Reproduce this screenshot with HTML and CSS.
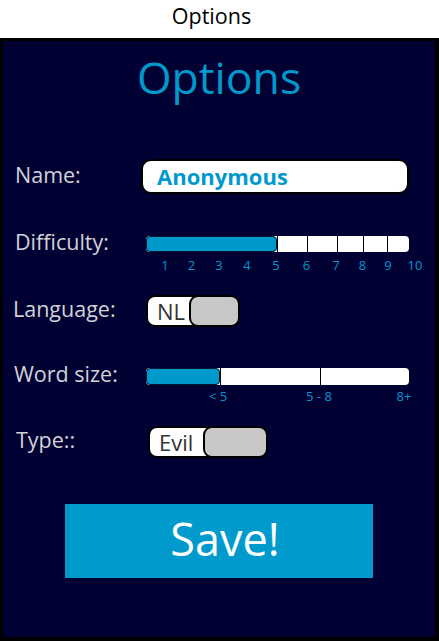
FILE: index.html
```html
<!DOCTYPE html>
<html lang="en">
<head>
<meta charset="utf-8">
<title>Options</title>
<link rel="stylesheet" href="styles.css">
</head>
<body>
<header class="topbar">Options</header>
<main class="panel">
  <h1 class="title">Options</h1>

  <div class="row row-name">
    <span class="lbl">Name:</span>
    <div class="input">Anonymous</div>
  </div>

  <div class="row row-bar row-diff">
    <span class="lbl lbl-bar">Difficulty:</span>
    <div class="ctrl">
      <div class="bar bar-diff">
        <span class="fill"></span>
        <span class="seg s1"></span>
        <span class="seg s2"></span>
        <span class="seg s3"></span>
        <span class="seg s4"></span>
        <span class="seg s5"></span>
      </div>
      <div class="ticks ticks-diff">
        <span>1</span><span>2</span><span>3</span><span>4</span><span>5</span>
        <span>6</span><span>7</span><span>8</span><span>9</span><span>10</span>
      </div>
    </div>
  </div>

  <div class="row row-lang">
    <span class="lbl lbl-lang">Language:</span>
    <div class="toggle toggle-lang">
      <span class="toggle-text">NL</span>
      <span class="knob"></span>
    </div>
  </div>

  <div class="row row-bar row-word">
    <span class="lbl lbl-bar lbl-word">Word size:</span>
    <div class="ctrl">
      <div class="bar bar-word">
        <span class="fill"></span>
        <span class="seg w1"></span>
        <span class="seg w2"></span>
      </div>
      <div class="ticks ticks-word">
        <span>&lt; 5</span><span>5 - 8</span><span>8+</span>
      </div>
    </div>
  </div>

  <div class="row row-type">
    <span class="lbl lbl-type">Type::</span>
    <div class="toggle toggle-type">
      <span class="toggle-text">Evil</span>
      <span class="knob"></span>
    </div>
  </div>

  <div class="save-wrap">
    <button class="save" type="button">Save!</button>
  </div>
</main>
</body>
</html>
```

FILE: styles.css
```css
* { box-sizing: border-box; }

html, body {
  margin: 0;
  padding: 0;
  background: #ffffff;
  font-family: "Open Sans", "Noto Sans", "Liberation Sans", sans-serif;
}

body {
  width: 439px;
  height: 641px;
  overflow: hidden;
}

.topbar {
  height: 38px;
  text-align: center;
  font-size: 21.5px;
  line-height: 32px;
  color: #000;
  padding-right: 16px;
}

.panel {
  height: 603px;
  background: #000033;
  border-style: solid;
  border-color: #000;
  border-width: 3px 4px 4px 3px;
  display: flex;
  flex-direction: column;
}

.title {
  margin: 14px 0 0 0;
  text-align: center;
  font-weight: 400;
  font-size: 44.5px;
  line-height: 43px;
  color: #0099cc;
}

.row {
  display: grid;
  grid-template-columns: 143px 1fr;
  align-items: center;
}

.lbl {
  padding-left: 12px;
  font-size: 21.5px;
  color: #d2d2d6;
  padding-bottom: 4px;
  white-space: nowrap;
}

.row-name {
  margin-top: 61px;
  height: 35px;
}

.input {
  margin-left: -5px;
  width: 268px;
  height: 35px;
  background: #fff;
  border: 2px solid #000;
  border-radius: 10px;
  padding-left: 14px;
  font-weight: 700;
  font-size: 22px;
  line-height: 30px;
  color: #0099cc;
}

.row-bar {
  align-items: start;
}

.lbl-bar {
  line-height: 16px;
  height: 16px;
  padding-bottom: 0;
  position: relative;
  top: -2px;
}

.row-diff { margin-top: 42px; }

.bar {
  display: flex;
  width: 263px;
  height: 16px;
  background: #fff;
  border-radius: 4px;
  overflow: hidden;
}

.bar .fill {
  flex: none;
  background: #0099cc;
  border: 1px solid #001a33;
  border-radius: 4px;
}

.bar .seg {
  flex: none;
  border-left: 1px solid #000;
}

.bar-diff .fill { width: 131px; }
.bar-diff .s1 { width: 30px; }
.bar-diff .s2 { width: 30px; }
.bar-diff .s3 { width: 26px; }
.bar-diff .s4 { width: 24px; }
.bar-diff .s5 { flex: 1; }

.bar-word { height: 17px; }
.bar-word .fill { width: 74px; }
.bar-word .w1 { width: 100px; }
.bar-word .w2 { flex: 1; }

.ticks {
  display: grid;
  font-size: 13px;
  line-height: 14px;
  color: #0099cc;
  text-align: center;
}

.ticks-diff {
  margin-top: 6px;
  margin-left: 6px;
  grid-template-columns: 26px 27px 28px 28px 30px 31px 28px 25px 26px 28px;
}

.ticks-word {
  margin-top: 4px;
  margin-left: 22px;
  grid-template-columns: 100px 102px 68px;
}

.row-lang {
  margin-top: 22px;
  height: 32px;
}

.lbl-lang { padding-left: 10px; }

.toggle {
  display: flex;
  height: 32px;
  background: #fff;
  border: 2px solid #000;
  border-radius: 9px;
}

.toggle-text {
  font-size: 22px;
  line-height: 28px;
  color: #333;
  padding-left: 9px;
}

.knob {
  margin: -2px -2px -2px auto;
  background: #c8c8c8;
  border: 2px solid #000;
  border-radius: 9px;
}

.toggle-lang { width: 94px; }
.toggle-lang .knob { width: 51px; }

.row-word { margin-top: 42px; }
.lbl-word { padding-left: 11px; }

.row-type {
  margin-top: 22px;
  height: 32px;
}

.lbl-type { padding-left: 13px; }

.toggle-type {
  width: 120px;
  margin-left: 2px;
}
.toggle-type .knob { width: 65px; }

.save-wrap {
  margin-top: 47px;
  display: flex;
  justify-content: center;
}

.save {
  width: 308px;
  height: 74px;
  background: #009acd;
  border: none;
  border-radius: 0;
  color: #fff;
  font-family: inherit;
  font-size: 45px;
  line-height: 70px;
  padding: 0 0 4px 12px;
}
```
